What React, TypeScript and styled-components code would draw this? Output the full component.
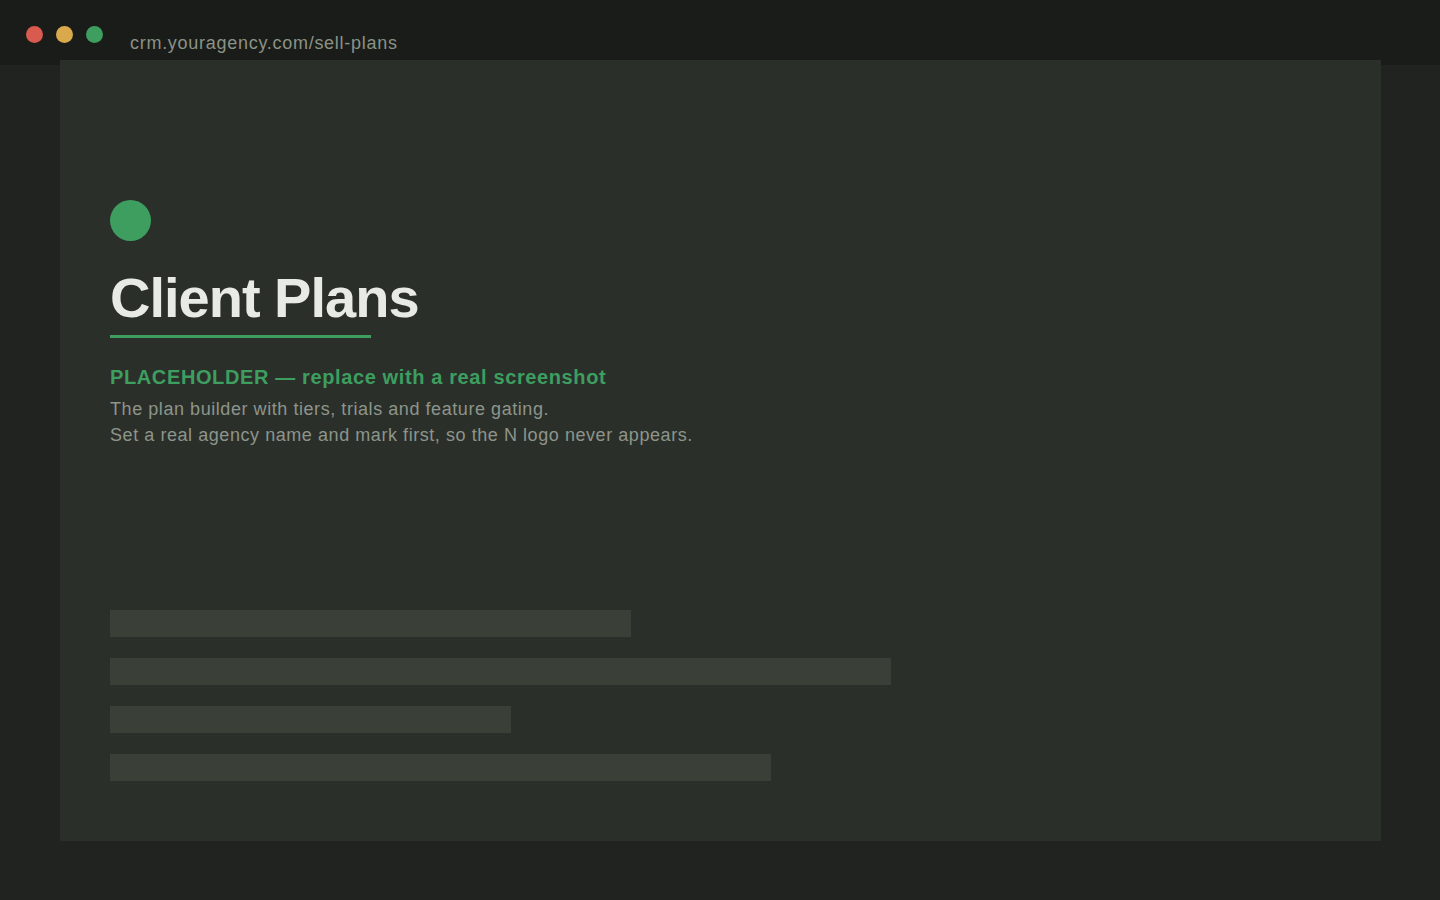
import React from "react";
import styled, { createGlobalStyle } from "styled-components";

const GlobalStyle = createGlobalStyle`
  html, body {
    margin: 0;
    padding: 0;
    background: #212320;
    font-family: "Liberation Sans", Arial, sans-serif;
  }
  * { box-sizing: border-box; }
`;

const Page = styled.div`
  width: 1440px;
  height: 900px;
  background: #212320;
  overflow: hidden;
`;

const TitleBar = styled.header`
  height: 65px;
  background: #1a1c19;
  display: flex;
  align-items: flex-start;
  padding: 26px 0 0 26px;
`;

const Lights = styled.div`
  display: flex;
  gap: 13px;
`;

const Light = styled.span<{ $color: string }>`
  width: 17px;
  height: 17px;
  border-radius: 50%;
  background: ${(p) => p.$color};
`;

const Address = styled.span`
  margin: 7px 0 0 27px;
  font-size: 18px;
  line-height: 21px;
  letter-spacing: 0.72px;
  color: #8a9286;
`;

const Panel = styled.main`
  margin: -5px 0 0 60px;
  width: 1321px;
  height: 781px;
  background: #2b2f2a;
  padding: 140px 50px 0;
  display: flex;
  flex-direction: column;
  align-items: flex-start;
`;

const Mark = styled.div`
  width: 41px;
  height: 41px;
  border-radius: 50%;
  background: #3d9e60;
`;

const Heading = styled.h1`
  margin: 29px 0 0;
  font-size: 56px;
  line-height: 56px;
  font-weight: 700;
  letter-spacing: -1px;
  color: #e8ebe5;
`;

const Rule = styled.div`
  margin-top: 9px;
  width: 261px;
  height: 3px;
  background: #3d9e60;
`;

const Notice = styled.p`
  margin: 27px 0 0;
  font-size: 20px;
  line-height: 24px;
  font-weight: 700;
  letter-spacing: 0.62px;
  color: #3d9e60;
`;

const Description = styled.p`
  margin: 7px 0 0;
  font-size: 18px;
  line-height: 26px;
  letter-spacing: 0.56px;
  color: #8d958a;
`;

const Skeleton = styled.div`
  margin-top: 162px;
  display: flex;
  flex-direction: column;
  gap: 21px;
`;

const SkeletonLine = styled.div<{ $width: number }>`
  width: ${(p) => p.$width}px;
  height: 27px;
  background: #3a3f38;
`;

const lines = [521, 781, 401, 661];

export default function App() {
  return (
    <Page>
      <GlobalStyle />
      <TitleBar>
        <Lights>
          <Light $color="#d95a4e" />
          <Light $color="#d9a94c" />
          <Light $color="#3d9e60" />
        </Lights>
        <Address>crm.youragency.com/sell-plans</Address>
      </TitleBar>
      <Panel>
        <Mark />
        <Heading>Client Plans</Heading>
        <Rule />
        <Notice>PLACEHOLDER — replace with a real screenshot</Notice>
        <Description>
          The plan builder with tiers, trials and feature gating.
          <br />
          Set a real agency name and mark first, so the N logo never appears.
        </Description>
        <Skeleton>
          {lines.map((w, i) => (
            <SkeletonLine key={i} $width={w} />
          ))}
        </Skeleton>
      </Panel>
    </Page>
  );
}
